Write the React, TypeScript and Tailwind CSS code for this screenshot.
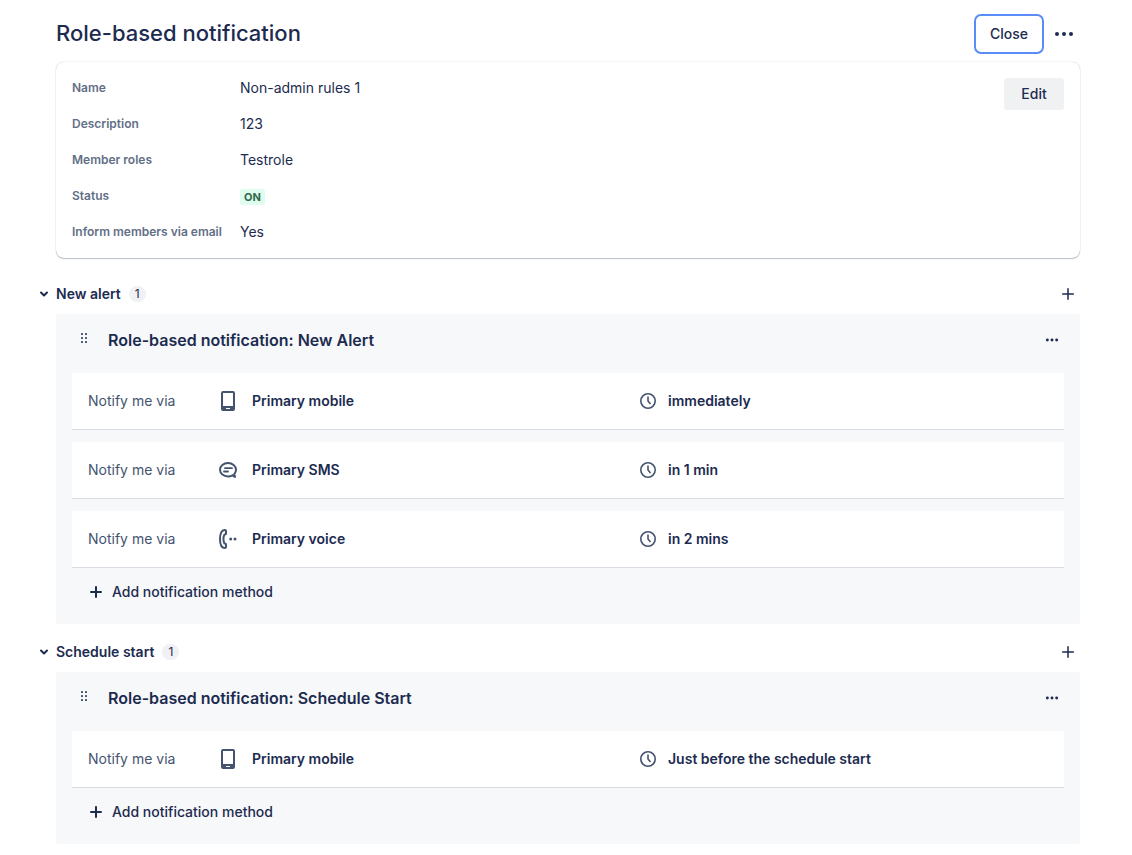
import { ChevronDown } from "lucide-react";
import type { ReactNode } from "react";

type Channel = "mobile" | "sms" | "voice";

type Step = {
  channel: Channel;
  label: string;
  when: string;
};

type Rule = {
  section: string;
  title: string;
  steps: Step[];
};

const rules: Rule[] = [
  {
    section: "New alert",
    title: "Role-based notification: New Alert",
    steps: [
      { channel: "mobile", label: "Primary mobile", when: "immediately" },
      { channel: "sms", label: "Primary SMS", when: "in 1 min" },
      { channel: "voice", label: "Primary voice", when: "in 2 mins" },
    ],
  },
  {
    section: "Schedule start",
    title: "Role-based notification: Schedule Start",
    steps: [
      {
        channel: "mobile",
        label: "Primary mobile",
        when: "Just before the schedule start",
      },
    ],
  },
];

function MobileIcon() {
  return (
    <svg viewBox="0 0 24 24" className="size-6" fill="none" aria-hidden="true">
      <path
        fillRule="evenodd"
        fill="currentColor"
        d="M7 2h10a2 2 0 0 1 2 2v16a2 2 0 0 1-2 2H7a2 2 0 0 1-2-2V4a2 2 0 0 1 2-2Zm0 2v13h10V4H7Zm3 15v1h4v-1h-4Z"
      />
    </svg>
  );
}

function SmsIcon() {
  return (
    <svg
      viewBox="0 0 24 24"
      className="size-6"
      fill="none"
      stroke="currentColor"
      strokeWidth="2"
      strokeLinecap="round"
      strokeLinejoin="round"
      aria-hidden="true"
    >
      <path d="M16.500 17.400C15.200 18.100 13.700 18.500 12 18.500C7.600 18.500 4 15.600 4 11.800S7.600 5 12 5s8 3 8 6.800c0 1.700-.7 3.200-1.800 4.400l.8 2.800-2.500-1.600" />
      <path d="M9 10.200h7M8 13.500h4" strokeWidth="1.800" />
    </svg>
  );
}

function VoiceIcon() {
  return (
    <svg
      viewBox="0 0 24 24"
      className="size-6"
      fill="none"
      stroke="currentColor"
      strokeWidth="2"
      strokeLinejoin="round"
      aria-hidden="true"
    >
      <path d="M8.900 3C5.400 3 4 7 4 12s1.400 9 4.900 9c.7 0 1.100-.4 1.100-1v-2.400c0-.6-.4-1-1-1h-.5C7.300 14 7.300 10 8.500 7.400H9c.6 0 1-.4 1-1V4c0-.6-.4-1-1.100-1Z" />
      <circle cx="14.700" cy="12" r="1.500" fill="currentColor" stroke="none" />
      <circle cx="19" cy="12" r="1.500" fill="currentColor" stroke="none" />
    </svg>
  );
}

function ClockIcon() {
  return (
    <svg
      viewBox="0 0 16 16"
      className="size-4"
      fill="none"
      stroke="currentColor"
      strokeWidth="1.600"
      aria-hidden="true"
    >
      <circle cx="8" cy="8" r="7.200" />
      <path d="M8 3.500V8l2.500 3" />
    </svg>
  );
}

function PlusIcon({ bold = false }: { bold?: boolean }) {
  return (
    <svg
      viewBox="0 0 16 16"
      className="size-4"
      stroke="currentColor"
      strokeWidth={bold ? 2 : 1.5}
      strokeLinecap="round"
      aria-hidden="true"
    >
      <path d={bold ? "M8 3v10M3 8h10" : "M8 2.700v10.600M2.700 8h10.600"} />
    </svg>
  );
}

function DotsIcon({ className, r }: { className: string; r: number }) {
  return (
    <svg
      viewBox="0 0 24 24"
      className={className}
      fill="currentColor"
      aria-hidden="true"
    >
      <circle cx="5" cy="12" r={r} />
      <circle cx="12" cy="12" r={r} />
      <circle cx="19" cy="12" r={r} />
    </svg>
  );
}

function DragIcon() {
  return (
    <svg viewBox="0 0 8 12" className="h-3 w-2" fill="#44546f" aria-hidden="true">
      {[1, 5, 9].map((y) => (
        <g key={y}>
          <rect x="1" y={y} width="2" height="2" rx="0.500" />
          <rect x="5" y={y} width="2" height="2" rx="0.500" />
        </g>
      ))}
    </svg>
  );
}

const channelIcons: Record<Channel, ReactNode> = {
  mobile: <MobileIcon />,
  sms: <SmsIcon />,
  voice: <VoiceIcon />,
};

function Field({ name, children }: { name: string; children: ReactNode }) {
  return (
    <div className="flex gap-4 text-sm/5">
      <dt className="w-[152px] whitespace-nowrap text-xs/5 font-semibold text-[#626f86]">
        {name}
      </dt>
      <dd>{children}</dd>
    </div>
  );
}

function StepRow({ step }: { step: Step }) {
  return (
    <li className="grid grid-cols-[128px_1fr_1fr] items-center border-b border-[#d9dce3] bg-white px-4 py-4">
      <span className="text-sm/6 text-[#44546f]">Notify me via</span>
      <div className="flex items-center gap-3 text-[#44546f]">
        {channelIcons[step.channel]}
        <span className="text-sm/6 font-semibold text-[#1c2b4f]">
          {step.label}
        </span>
      </div>
      <div className="flex items-center gap-1 text-[#44546f]">
        <span className="flex w-8 justify-center">
          <ClockIcon />
        </span>
        <span className="text-sm/6 font-semibold text-[#1c2b4f]">
          {step.when}
        </span>
      </div>
    </li>
  );
}

function RuleSection({ rule }: { rule: Rule }) {
  return (
    <section>
      <div className="mb-1 flex h-8 items-center justify-between">
        <button className="-ml-5 flex items-center gap-1 text-sm/5 font-semibold">
          <span className="flex w-4 justify-center">
            <ChevronDown className="size-3" strokeWidth={4} />
          </span>
          {rule.section}
          <span className="ml-1 rounded-full bg-[#f0f1f4] px-1.5 text-xs/4 font-normal">
            1
          </span>
        </button>
        <button
          aria-label={`Add rule to ${rule.section}`}
          className="flex size-6 items-center justify-center"
        >
          <PlusIcon />
        </button>
      </div>
      <div className="rounded-[3px] bg-[#f7f8fa] px-4 pt-2.5 pb-4">
        <div className="mb-[17px] flex h-8 items-center">
          <button
            aria-label="Reorder rule"
            className="mb-1 flex w-6 justify-center"
          >
            <DragIcon />
          </button>
          <h3 className="ml-3 text-base/6 font-semibold">{rule.title}</h3>
          <button
            aria-label="Rule actions"
            className="ml-auto flex size-6 items-center justify-center"
          >
            <DotsIcon className="size-4" r={2.2} />
          </button>
        </div>
        <ul className="flex flex-col gap-3">
          {rule.steps.map((step) => (
            <StepRow key={step.label} step={step} />
          ))}
        </ul>
        <button className="mt-2 ml-4 flex h-8 items-center gap-2 text-sm/5 font-medium">
          <PlusIcon bold />
          Add notification method
        </button>
      </div>
    </section>
  );
}

export default function App() {
  return (
    <main className="min-h-screen bg-white pt-[18px] pr-[52px] pb-[11px] pl-14 font-['Inter','Liberation_Sans',sans-serif] text-[#1c2b4f]">
      <header className="flex h-8 items-center justify-between">
        <h1 className="pb-0.5 text-[22px]/7 font-medium">
          Role-based notification
        </h1>
        <div className="flex items-center gap-2">
          <button className="h-8 rounded-[3px] px-3 text-sm/5 font-medium outline-2 outline-offset-2 outline-[#5a8cf8]">
            Close
          </button>
          <button
            aria-label="More actions"
            className="flex size-8 items-center justify-center"
          >
            <DotsIcon className="size-6" r={2} />
          </button>
        </div>
      </header>

      <div className="mt-3 flex items-start justify-between rounded-lg p-4 shadow-[0_1px_1px_rgba(9,30,66,0.25),0_0_1px_rgba(9,30,66,0.31)]">
        <dl className="flex flex-col gap-4">
          <Field name="Name">Non-admin rules 1</Field>
          <Field name="Description">123</Field>
          <Field name="Member roles">Testrole</Field>
          <Field name="Status">
            <span className="inline-block rounded-[3px] bg-[#dffcee] px-1 text-[11px]/4 font-bold text-[#2f6b4b]">
              ON
            </span>
          </Field>
          <Field name="Inform members via email">Yes</Field>
        </dl>
        <button className="h-8 w-15 rounded-[3px] bg-[#f0f1f3] text-sm/5 font-medium">
          Edit
        </button>
      </div>

      <div className="mt-5 flex flex-col gap-3">
        {rules.map((rule) => (
          <RuleSection key={rule.section} rule={rule} />
        ))}
      </div>
    </main>
  );
}
